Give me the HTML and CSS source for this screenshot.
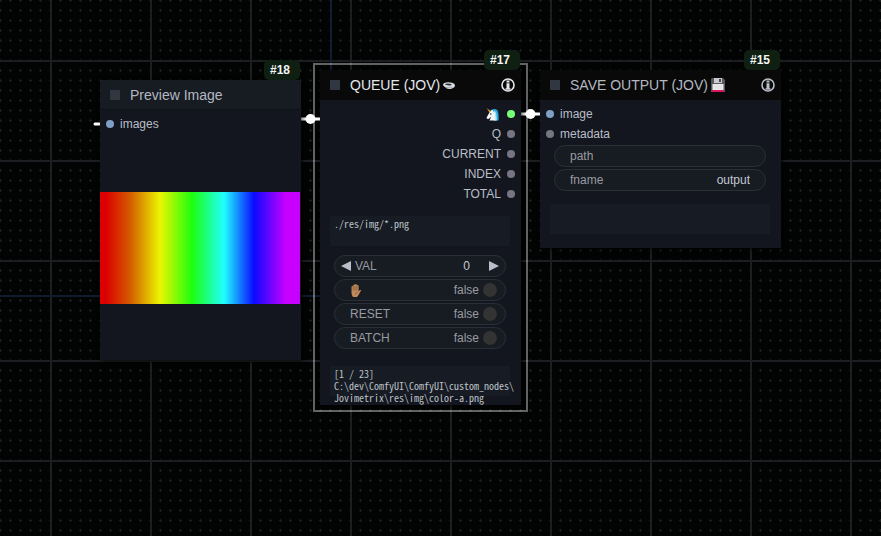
FILE: index.html
```html
<!DOCTYPE html>
<html lang="en">
<head>
<meta charset="utf-8">
<title>Node graph</title>
<link rel="stylesheet" href="styles.css">
</head>
<body>
<main class="canvas">
  <svg class="grid" aria-hidden="true">
    <defs>
      <pattern id="dots" width="10" height="10" patternUnits="userSpaceOnUse">
        <path d="M0 0h2v1H0zM9 0h1v1H9zM0 1h1v1H0zM0 9h1v1H0z" fill="#1b1d1e"/>
      </pattern>
      <pattern id="lines" x="50" y="60" width="100" height="100" patternUnits="userSpaceOnUse">
        <path d="M0 0h100v2H2v98H0z" fill="#1c1e21"/>
      </pattern>
    </defs>
    <rect width="100%" height="100%" fill="url(#dots)"/>
    <rect width="100%" height="100%" fill="url(#lines)"/>
    <path d="M330 0h2v297h-2z" fill="#121c34"/>
    <path d="M0 295h330v2H0z" fill="#111b30"/>
  </svg>
  <svg class="links" aria-hidden="true">
    <path d="M95 124h6M301 119h20M520 114h21" stroke="#fff" stroke-width="3" stroke-linecap="round"/>
    <circle cx="310.500" cy="119" r="5" fill="#fff"/>
    <circle cx="530.500" cy="114" r="5" fill="#fff"/>
  </svg>

  <section class="node preview">
    <span class="badge">#18</span>
    <header class="title plain"><i class="box"></i><h2>Preview Image</h2></header>
    <ul class="slots"><li><i class="dot blue"></i>images</li></ul>
    <div class="picture"></div>
  </section>

  <section class="node queue selected">
    <span class="badge">#17</span>
    <header class="title"><i class="box"></i><h2>QUEUE (JOV)</h2>
      <svg class="bowl" viewBox="0 0 12 9" aria-hidden="true">
        <path d="M0 3.500Q0 2 3 1.500Q6 1 9 1.800Q12 2.500 12 4.500Q12 6 10 7Q8 8.300 6 8Q3.500 7.800 2 6Q0 5 0 3.500z" fill="#d9dde2"/>
        <path d="M1.500 3.300Q4 1.800 8.500 3Q9 4.200 7 4.400Q3.500 4.600 1.500 3.300z" fill="#2b3037"/>
        <path d="M3 6.300Q6 7.300 9.500 6" fill="none" stroke="#8b949e" stroke-width=".7"/>
      </svg>
      <svg class="info" viewBox="0 0 14 14" role="img" aria-label="Info"><circle cx="7" cy="7" r="6" fill="none" stroke="currentColor" stroke-width="1.600"/><path d="M5.500 2.500h3v2h-3zM5.500 5.300h3v5h1v1.500h-5v-1.500h1z" fill="currentColor"/></svg>
    </header>
    <ul class="slots out">
      <li><svg class="unicorn" viewBox="0 0 13 13" role="img" aria-label="Unicorn">
        <path d="M5.500 2Q9-.2 11.500 2.500Q13 5 12.500 12.500H8z" fill="#29abe2"/>
        <path d="M8 2.500q2.500 1 2.500 5l.5 5H8z" fill="#9be4fb"/>
        <path d="M4 3.500L6 1.500l1.200 1.700q2.300 1.500 2 5l.3 4.300H3.500l1.700-3.700L2.500 11Q.5 11.200.6 9.500z" fill="#f3f4f6"/>
        <path d="M.8.300L5 3.200 3.600 4.500z" fill="#f5b52e"/><circle cx="4.800" cy="6" r=".8" fill="#222"/>
      </svg><i class="dot green"></i></li>
      <li>Q<i class="dot"></i></li>
      <li>CURRENT<i class="dot"></i></li>
      <li>INDEX<i class="dot"></i></li>
      <li>TOTAL<i class="dot"></i></li>
    </ul>
    <textarea class="text source" aria-label="Source" spellcheck="false">./res/img/*.png</textarea>
    <div class="widgets">
      <div class="widget number">
        <button type="button" aria-label="Decrease"><svg viewBox="0 0 10 10"><path d="M10 0v10L0 5z" fill="currentColor"/></svg></button>
        <label for="val">VAL</label><input id="val" value="0">
        <button type="button" aria-label="Increase"><svg viewBox="0 0 10 10"><path d="M0 0l10 5L0 10z" fill="currentColor"/></svg></button>
      </div>
      <label class="widget"><svg class="hand" viewBox="0 0 11 13" role="img" aria-label="Hold">
        <path d="M1.500 3q0-1 .8-1t.9 1V1.500q0-1 .9-1t.9 1V1q0-1 .9-1t.9 1v1q0-1 .9-1t.9 1v5.500l1-1.200q1-.9 1.500 0L8.500 11 7 13H3q-1.500-2-1.500-4z" fill="#c08a5b"/>
        <path d="M3.200 3v3.500M5 2v4.500M6.800 2v4.500M7.500 8Q5.500 8.500 5.500 10.500" fill="none" stroke="#6d472c" stroke-width=".6"/>
      </svg><span class="value">false</span><input type="checkbox" aria-label="Hold"></label>
      <label class="widget">RESET<span class="value">false</span><input type="checkbox"></label>
      <label class="widget">BATCH<span class="value">false</span><input type="checkbox"></label>
    </div>
    <pre class="text status">[1 / 23]
C:\dev\ComfyUI\ComfyUI\custom_nodes\
Jovimetrix\res\img\color-a.png</pre>
  </section>

  <section class="node save">
    <span class="badge">#15</span>
    <header class="title"><i class="box"></i><h2>SAVE OUTPUT (JOV)</h2>
      <svg class="disk" viewBox="0 0 14 14" role="img" aria-label="Save">
        <path d="M1 0h11l2 2v12H0V1z" fill="#55585e"/><path d="M3 0h8v5H3z" fill="#c9cbd0"/><path d="M8 1h2v3H8z" fill="#44474c"/>
        <path d="M1.500 6h11v6h-11z" fill="#eceaec"/><path d="M1.500 12h11v2h-11z" fill="#e0115f"/><path d="M3 8h8M3 10h8" stroke="#d4d1d5" stroke-width=".6"/>
      </svg>
      <svg class="info" viewBox="0 0 14 14" role="img" aria-label="Info"><circle cx="7" cy="7" r="6" fill="none" stroke="currentColor" stroke-width="1.600"/><path d="M5.500 2.500h3v2h-3zM5.500 5.300h3v5h1v1.500h-5v-1.500h1z" fill="currentColor"/></svg>
    </header>
    <ul class="slots">
      <li><i class="dot blue"></i>image</li>
      <li><i class="dot"></i>metadata</li>
    </ul>
    <div class="widgets">
      <div class="widget"><label for="path">path</label><input id="path" class="field"></div>
      <div class="widget"><label for="fname">fname</label><input id="fname" class="field" value="output"></div>
    </div>
    <textarea class="text note" aria-label="Note"></textarea>
  </section>
</main>
</body>
</html>
```
FILE: styles.css
```css
* { box-sizing: border-box; }
body {
  margin: 0;
  background: #020303;
  color: #b9bec8;
  font: 12px/20px "Liberation Sans", Arial, sans-serif;
}
.canvas { position: relative; min-height: 100vh; overflow: hidden; }
.grid, .links { position: absolute; inset: 0; width: 100%; height: 100%; }
.node {
  position: absolute;
  display: flex;
  flex-direction: column;
  background: #13161e;
  box-shadow: 2px 2px 4px rgba(0, 0, 0, .6);
}
.preview { left: 100px; top: 80px; width: 201px; padding-bottom: 56px; }
.queue { left: 320px; top: 70px; width: 201px; }
.save { left: 540px; top: 70px; width: 241px; padding-bottom: 14px; }
.selected { outline: 2px solid rgba(255, 255, 255, .38); outline-offset: 5px; }

.badge {
  position: absolute;
  right: 1px;
  bottom: 100%;
  padding: 0 10px 0 6px;
  border-radius: 5px;
  background: #0f1f12;
  color: #f4f6f4;
  font-weight: bold;
}
.title {
  display: flex;
  align-items: center;
  height: 30px;
  padding: 0 6px 0 10px;
  background: #090909;
  font-size: 14px;
}
.title.plain { background: #171b22; border-bottom: 1px solid #0f1217; }
.title h2 { margin: 0 3px 0 10px; font-size: 14px; font-weight: normal; color: #b3b8c1; }
.selected h2, .selected .info { color: #e4e7ec; }
.box { width: 10px; height: 10px; background: #303740; }
.info { width: 14px; height: 14px; margin-left: auto; }
.bowl { width: 12px; height: 9px; }
.disk { width: 14px; height: 14px; }

.slots { margin: 0; padding: 4px 6px 0; list-style: none; }
.slots li { display: flex; align-items: center; gap: 6px; height: 20px; }
.out li { justify-content: flex-end; }
.dot { width: 8px; height: 8px; border-radius: 50%; background: #777584; }
.blue { background: #7f9fc4; }
.green { background: #7f7; }
.unicorn { width: 13px; height: 13px; margin-right: 2px; }

.picture {
  height: 112px;
  margin: 58px 1px 0 0;
  background: linear-gradient(90deg, #dc0000 3%, #d45b00 15%, #ebf500 30%, #1cff0d 46%, #20ffff 62%, #0a0aff 77%, #c800ff 93%);
}

.text {
  display: block;
  height: 30px;
  margin: 0 11px 0 10px;
  padding: 2px 4px;
  border: 0;
  resize: none;
  overflow: hidden;
  background: #171b23;
  color: #bdc1c8;
  font: 10px/12px "Noto Sans Mono CJK JP", "Noto Sans Mono CJK SC", Inconsolata, "Liberation Mono", monospace;
}
.source { margin-top: 12px; }
.status { height: 39px; margin-top: 17px; overflow: visible; background: linear-gradient(#171b23 30px, transparent 30px); }
.note { margin-top: 13px; }

.widgets { display: flex; flex-direction: column; gap: 2px; padding: 9px 15px 0 14px; }
.save .widgets { padding-top: 1px; }
.widget {
  display: flex;
  align-items: center;
  height: 22px;
  padding: 0 8px 0 15px;
  border: 1px solid #2a2e36;
  border-radius: 11px;
  background: #171b22;
  color: #989ba1;
}
.value { margin-left: auto; }
.widget input[type="checkbox"] {
  appearance: none;
  width: 14px;
  height: 14px;
  margin: 0 0 0 4px;
  border-radius: 50%;
  background: #333;
}
.number { padding: 0 6px; gap: 4px; }
.number button { display: flex; padding: 0; border: 0; background: none; color: #b9bec8; }
.number svg { width: 10px; height: 10px; }
.widget input:not([type]) {
  flex: 1;
  min-width: 0;
  padding: 0;
  border: 0;
  background: none;
  color: #c3c8d2;
  font: inherit;
  text-align: right;
}
.number input { margin-right: 15px; }
.widget .field { margin-right: 7px; }
.hand { width: 11px; height: 13px; }
```
